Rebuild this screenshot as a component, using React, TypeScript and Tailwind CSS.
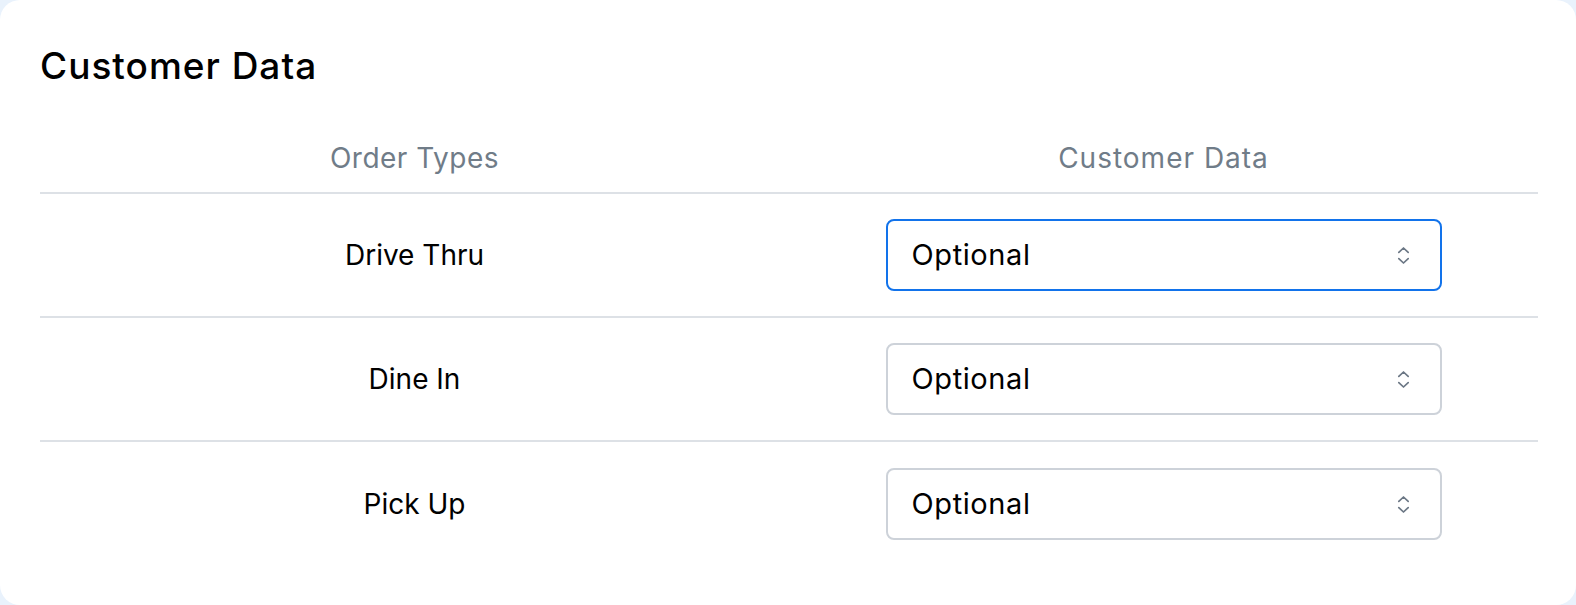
import React from "react";

const font = { fontFamily: "Inter, 'Noto Sans', sans-serif" };

function Chevrons() {
  return (
    <svg width="13" height="19" viewBox="0 0 13 19" fill="none" stroke="#6b7785" strokeWidth="1.7" strokeLinecap="round" strokeLinejoin="round">
      <path d="M1.8 6.4 L6.5 2 L11.2 6.4" />
      <path d="M1.8 12.6 L6.5 17 L11.2 12.6" />
    </svg>
  );
}

function Select({ active }: { active?: boolean }) {
  return (
    <div
      className={
        "w-[556px] h-[72px] rounded-[8px] border-2 bg-white flex items-center justify-between pl-[24px] pr-[30px] " +
        (active ? "border-[#1273eb]" : "border-[#cdd2d9]")
      }
    >
      <span className="text-[29px] leading-[36px] text-black tracking-[0.6px]">Optional</span>
      <Chevrons />
    </div>
  );
}

const rows = ["Drive Thru", "Dine In", "Pick Up"];

export default function App() {
  return (
    <div className="w-[1576px] h-[605px] bg-[#e9f2fc]" style={font}>
      <div className="h-full bg-white rounded-[20px] pl-10 pr-[38px] pt-[42px]">
        <h2 className="text-[37px] leading-[48px] font-medium text-black tracking-[1px]">Customer Data</h2>
        <div className="mt-[50px] grid grid-cols-2 border-b-2 border-[#dde1e6] pb-[16px]">
          <div className="text-center text-[28px] leading-[36px] text-[#707c88] tracking-[0.5px]">Order Types</div>
          <div className="text-center text-[28px] leading-[36px] text-[#707c88] tracking-[1px]">Customer Data</div>
        </div>
        {rows.map((r, i) => (
          <div
            key={r}
            className={
              "grid grid-cols-2 items-center h-[124px] " +
              (i < rows.length - 1 ? "border-b-2 border-[#dde1e6]" : "")
            }
          >
            <div className="text-center text-[28px] leading-[36px] text-black">{r}</div>
            <div className="flex justify-center">
              <Select active={i === 0} />
            </div>
          </div>
        ))}
      </div>
    </div>
  );
}
